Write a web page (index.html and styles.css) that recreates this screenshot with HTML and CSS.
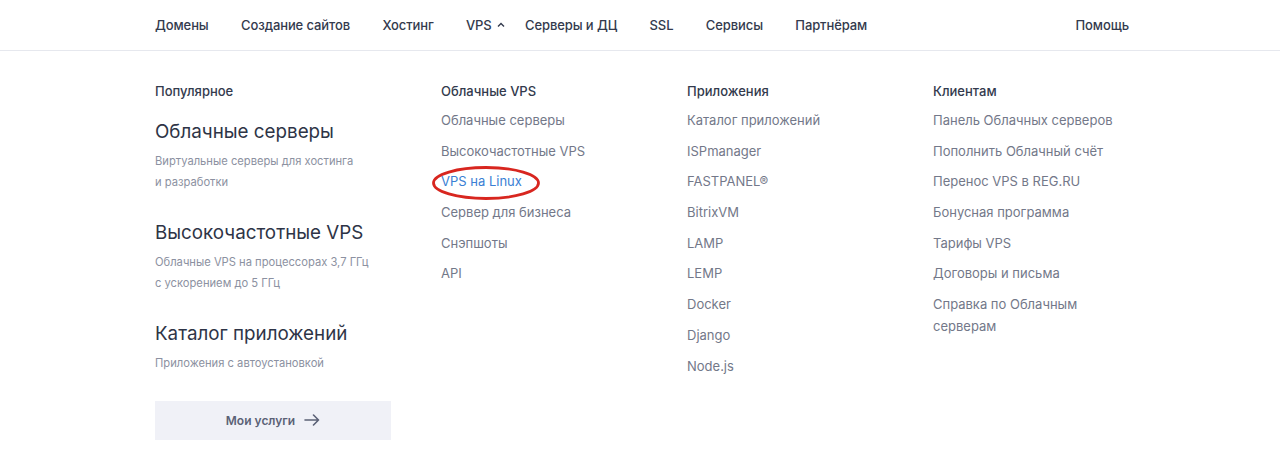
FILE: index.html
```html
<!DOCTYPE html>
<html lang="ru">
<head>
<meta charset="utf-8">
<title>VPS</title>
<link rel="stylesheet" href="styles.css">
</head>
<body>
<header class="header">
  <div class="container nav">
    <nav class="nav-main">
      <a class="nav-item">Домены</a>
      <a class="nav-item">Создание сайтов</a>
      <a class="nav-item">Хостинг</a>
      <a class="nav-item nav-vps">VPS<svg class="caret" width="8" height="6" viewBox="0 0 8 6"><path d="M1 4.5 L4 1.5 L7 4.5" fill="none" stroke="#333a4d" stroke-width="1.4"/></svg></a>
      <a class="nav-item">Серверы и ДЦ</a>
      <a class="nav-item">SSL</a>
      <a class="nav-item">Сервисы</a>
      <a class="nav-item">Партнёрам</a>
    </nav>
    <a class="nav-item">Помощь</a>
  </div>
</header>
<main class="container menu">
  <section class="col col-popular">
    <h3 class="col-title">Популярное</h3>
    <div class="promo">
      <div class="promo-title">Облачные серверы</div>
      <div class="promo-desc">Виртуальные серверы для хостинга<br>и разработки</div>
    </div>
    <div class="promo">
      <div class="promo-title">Высокочастотные VPS</div>
      <div class="promo-desc">Облачные VPS на процессорах 3,7 ГГц<br>с ускорением до 5 ГГц</div>
    </div>
    <div class="promo">
      <div class="promo-title">Каталог приложений</div>
      <div class="promo-desc">Приложения с автоустановкой</div>
    </div>
    <a class="btn">Мои услуги <svg width="16" height="12" viewBox="0 0 16 12"><path d="M1 6 H14.5 M9.5 1 L14.5 6 L9.5 11" fill="none" stroke="#5b6176" stroke-width="1.6" stroke-linecap="round" stroke-linejoin="round"/></svg></a>
  </section>
  <section class="col col-vps">
    <h3 class="col-title">Облачные VPS</h3>
    <ul class="links">
      <li>Облачные серверы</li>
      <li>Высокочастотные VPS</li>
      <li class="active"><span class="circled">VPS на Linux<svg class="ring" width="110" height="36" viewBox="0 0 110 36"><ellipse cx="55" cy="18" rx="52.5" ry="15.5" fill="none" stroke="#d8261f" stroke-width="2.8"/></svg></span></li>
      <li>Сервер для бизнеса</li>
      <li>Снэпшоты</li>
      <li>API</li>
    </ul>
  </section>
  <section class="col col-apps">
    <h3 class="col-title">Приложения</h3>
    <ul class="links">
      <li>Каталог приложений</li>
      <li>ISPmanager</li>
      <li>FASTPANEL®</li>
      <li>BitrixVM</li>
      <li>LAMP</li>
      <li>LEMP</li>
      <li>Docker</li>
      <li>Django</li>
      <li>Node.js</li>
    </ul>
  </section>
  <section class="col col-clients">
    <h3 class="col-title">Клиентам</h3>
    <ul class="links">
      <li>Панель Облачных серверов</li>
      <li>Пополнить Облачный счёт</li>
      <li>Перенос VPS в REG.RU</li>
      <li>Бонусная программа</li>
      <li>Тарифы VPS</li>
      <li>Договоры и письма</li>
      <li>Справка по Облачным<br>серверам</li>
    </ul>
  </section>
</main>
</body>
</html>
```

FILE: styles.css
```css
* { box-sizing: border-box; }
html, body { margin: 0; padding: 0; background: #fff; }
body {
  font-family: Inter, "Noto Sans", sans-serif;
  color: #333a4d;
  -webkit-font-smoothing: antialiased;
}
.container {
  width: 974px;
  margin-left: 155px;
}
.header {
  height: 51px;
  border-bottom: 1px solid #e6e8ee;
}
.nav {
  height: 50px;
  display: flex;
  align-items: center;
  justify-content: space-between;
}
.nav-main {
  display: flex;
  align-items: center;
  gap: 32.4px;
}
.nav-item {
  font-size: 13px;
  font-weight: 500;
  color: #333a4d;
  line-height: 20px;
  text-decoration: none;
  white-space: nowrap;
  letter-spacing: -0.1px;
}
.nav-vps { margin-right: -12px; }
.caret { margin-left: 5px; vertical-align: 2px; }
.menu {
  display: grid;
  grid-template-columns: 286px 246px 246px 1fr;
  padding-top: 30px;
}
.col-title {
  margin: 0 0 8px;
  font-size: 13px;
  font-weight: 500;
  line-height: 20px;
  color: #333a4d;
}
.promo { margin-top: 19px; }
.promo + .promo { margin-top: 29px; }
.promo-title {
  font-size: 18.8px;
  font-weight: 400;
  line-height: 24px;
  color: #2e3446;
}
.promo-desc {
  margin-top: 7px;
  font-size: 11.2px;
  line-height: 20.5px;
  color: #8c91a1;
}
.btn {
  margin-top: 27px;
  display: flex;
  align-items: center;
  justify-content: center;
  gap: 9px;
  width: 236px;
  height: 39px;
  background: #f0f1f7;
  font-size: 12px;
  font-weight: 600;
  color: #5b6176;
}
.links {
  list-style: none;
  margin: 0;
  padding: 0;
  display: flex;
  flex-direction: column;
  gap: 8.7px;
}
.links li {
  font-size: 13px;
  line-height: 22px;
  color: #737889;
}
.links li.active { color: #3b7fd4; }
.circled { position: relative; }
.ring {
  position: absolute;
  left: -10px;
  top: -8px;
  pointer-events: none;
}
```
